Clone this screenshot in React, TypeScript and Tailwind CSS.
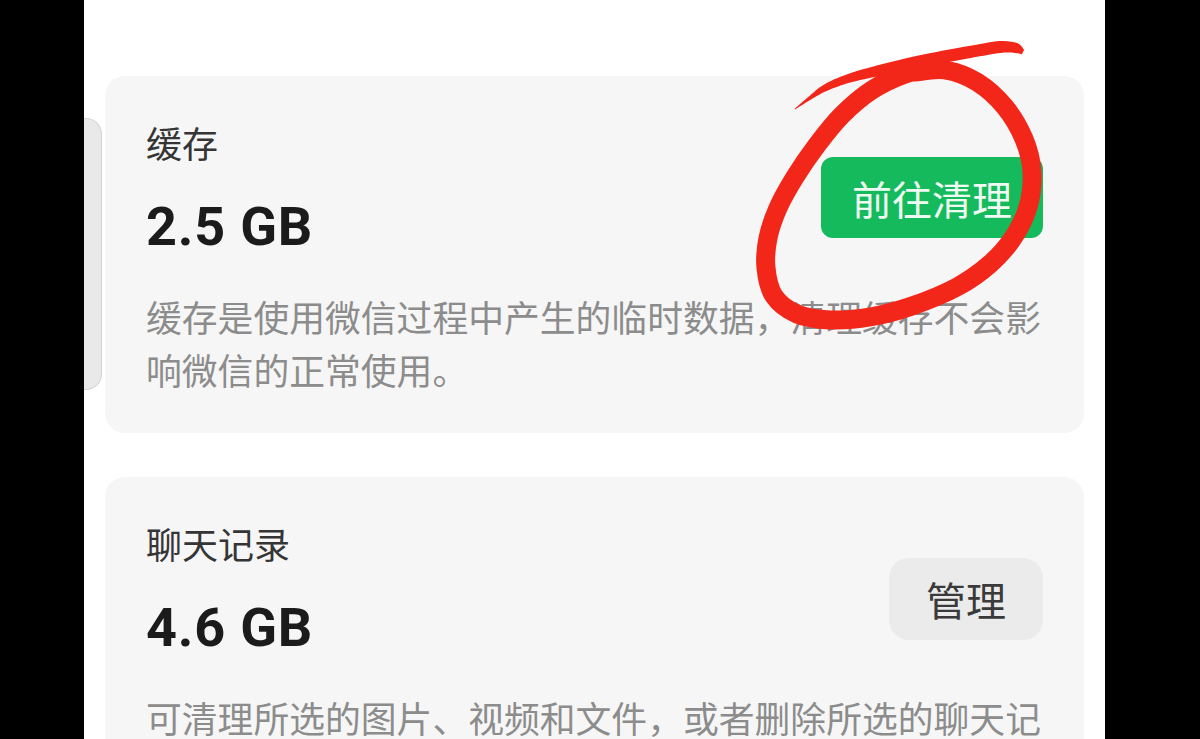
import React from "react";

type P = [number, number];

function catmull(points: P[]): string {
  const pts: P[] = [points[0], ...points, points[points.length - 1]];
  let d = `M${pts[1][0]},${pts[1][1]}`;
  for (let i = 1; i < pts.length - 2; i++) {
    const p0 = pts[i - 1], p1 = pts[i], p2 = pts[i + 1], p3 = pts[i + 2];
    const c1x = p1[0] + (p2[0] - p0[0]) / 6;
    const c1y = p1[1] + (p2[1] - p0[1]) / 6;
    const c2x = p2[0] - (p3[0] - p1[0]) / 6;
    const c2y = p2[1] - (p3[1] - p1[1]) / 6;
    d += ` C${c1x.toFixed(1)},${c1y.toFixed(1)} ${c2x.toFixed(1)},${c2y.toFixed(1)} ${p2[0]},${p2[1]}`;
  }
  return d;
}

function taper(points: [number, number, number][]): string {
  const up: P[] = [];
  const down: P[] = [];
  for (let i = 0; i < points.length; i++) {
    const prev = points[Math.max(0, i - 1)];
    const next = points[Math.min(points.length - 1, i + 1)];
    let dx = next[0] - prev[0];
    let dy = next[1] - prev[1];
    const len = Math.hypot(dx, dy) || 1;
    dx /= len;
    dy /= len;
    const nx = -dy, ny = dx;
    const w = points[i][2] / 2;
    up.push([+(points[i][0] + nx * w).toFixed(1), +(points[i][1] + ny * w).toFixed(1)]);
    down.push([+(points[i][0] - nx * w).toFixed(1), +(points[i][1] - ny * w).toFixed(1)]);
  }
  const a = catmull(up);
  const b = catmull(down.reverse()).replace(/^M/, "L");
  return `${a} ${b} Z`;
}

const circlePts: P[] = [
  [915, 72], [945, 70], [977, 82], [1005, 107], [1024, 139], [1032, 172],
  [1028, 207], [1013, 238], [990, 264], [957, 287], [912, 306], [870, 317],
  [830, 320], [797, 314], [774, 296], [766, 268], [768, 238], [778, 208],
  [795, 177], [817, 145], [842, 115], [872, 90], [905, 74], [935, 67],
];

const tailPts: [number, number, number][] = [
  [795, 109, 1], [810, 98, 4], [825, 88, 7], [850, 78, 9], [890, 68, 11],
  [927, 60, 12], [970, 52, 12], [1000, 47, 12], [1016, 48, 10], [1023, 52, 5],
];

const cjk = "font-['Noto_Sans_CJK_SC','Noto_Sans',sans-serif]";

function Card(props: {
  title: string;
  value: string;
  desc: string;
  button: React.ReactNode;
}) {
  return (
    <div className="rounded-[20px] bg-[#f6f6f6] pt-[41px] px-[41px] pb-[37px]">
      <div className="flex items-start justify-between">
        <div className="flex flex-col">
          <div className={`${cjk} text-[36px] leading-[50px] text-[#353535]`}>{props.title}</div>
          <div className="mt-[28px] font-['Roboto',sans-serif] font-bold text-[54px] leading-[64px] tracking-[0.8px] text-[#1b1b1b]">
            {props.value}
          </div>
        </div>
        <div className="mt-[40px]">{props.button}</div>
      </div>
      <div className={`${cjk} mt-[31px] text-[35.8px] leading-[53px] text-[#8c8c8c]`}>{props.desc}</div>
    </div>
  );
}

export default function App() {
  return (
    <div className="relative w-[1200px] h-[739px] overflow-hidden bg-black flex">
      <div className="w-[84px] shrink-0" />
      <div className="w-[1021px] shrink-0 bg-white px-[21px] pt-[76px] flex flex-col gap-[44px]">
        <Card
          title="缓存"
          value="2.5 GB"
          desc="缓存是使用微信过程中产生的临时数据，清理缓存不会影响微信的正常使用。"
          button={
            <div className={`${cjk} w-[222px] h-[81px] rounded-[12px] bg-[#14ba5c] flex items-center justify-center text-[40px] text-[#eefaf2]`}>
              前往清理
            </div>
          }
        />
        <Card
          title="聊天记录"
          value="4.6 GB"
          desc="可清理所选的图片、视频和文件，或者删除所选的聊天记录。"
          button={
            <div className={`${cjk} w-[154px] h-[82px] rounded-[20px] bg-[#ebebeb] flex items-center justify-center text-[40px] text-[#3a3a3a]`}>
              管理
            </div>
          }
        />
      </div>
      <div className="absolute left-[84px] top-[118px] w-[18px] h-[272px] bg-[#e9e9e9] border border-l-0 border-[#d4d4d4] rounded-r-[16px]" />
      <svg className="absolute left-0 top-0 pointer-events-none" width="1200" height="739" viewBox="0 0 1200 739">
        <path d={catmull(circlePts)} fill="none" stroke="#f3261a" strokeWidth="19" strokeLinecap="round" strokeLinejoin="round" />
        <path d={taper(tailPts)} fill="#f3261a" />
      </svg>
    </div>
  );
}
